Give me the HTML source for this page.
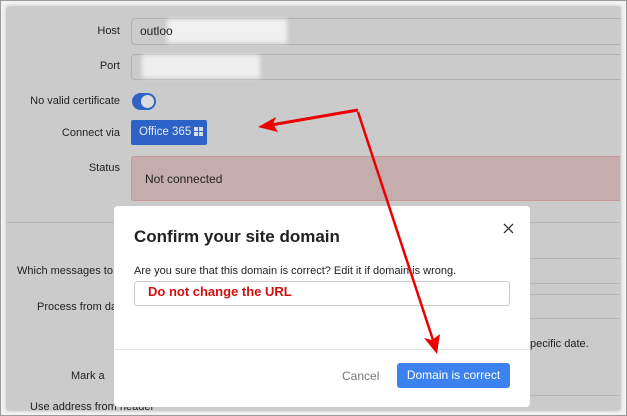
<!DOCTYPE html><html><head><style>
body{margin:0;width:627px;height:416px;overflow:hidden;background:#fff;font-family:"Liberation Sans",sans-serif;position:relative}
.frame{position:absolute;left:0;top:0;width:625px;height:414px;border:1px solid #9a9a9a;background:#f4f4f4}
.page{position:absolute;left:7px;top:7px;width:613px;height:403px;background:#cbcbcb;box-shadow:0 0 4px #999;overflow:hidden}
.t{position:absolute;font-size:11px;color:#222;white-space:nowrap}
.in{position:absolute;border:1px solid #b0b0b0;border-radius:4px;background:#cbcbcb}
.hl{position:absolute;left:0;right:0;height:1px;background:#b5b5b5}
.modal{position:absolute;left:114px;top:206px;width:416px;height:201px;background:#fff;border-radius:4px}
</style></head><body>
<div class="frame"></div>
<div class="page">
<div class="t" style="right:500px;top:18px">Host</div>
<div class="in" style="left:124px;top:11px;width:500px;height:25px"></div>
<div style="position:absolute;left:160px;top:12px;width:120px;height:24px;background:#f0f0f0;filter:blur(2px)"></div>
<div class="t" style="left:133px;top:17px;font-size:12px">outloo</div>
<div class="t" style="right:500px;top:53px">Port</div>
<div class="in" style="left:124px;top:47px;width:500px;height:24px"></div>
<div style="position:absolute;left:135px;top:48px;width:118px;height:23px;background:#efefef;filter:blur(2px)"></div>
<div class="t" style="right:500px;top:88px">No valid certificate</div>
<div style="position:absolute;left:125px;top:86px;width:24px;height:17px;border-radius:9px;background:#2f63c3"><div style="position:absolute;right:2px;top:2px;width:13px;height:13px;border-radius:50%;background:#ddd"></div></div>
<div class="t" style="right:500px;top:120px">Connect via</div>
<div style="position:absolute;left:124px;top:113px;width:76px;height:25px;background:#2d63c8;border-radius:2px;color:#e8e8e8;font-size:11.5px;line-height:24px;padding-left:8px;box-sizing:border-box;white-space:nowrap">Office 365 <svg width="9" height="9" style="vertical-align:-1px"><rect x="0" y="0" width="4" height="4" fill="#ddd"/><rect x="5" y="0" width="4" height="4" fill="#ddd"/><rect x="0" y="5" width="4" height="4" fill="#ddd"/><rect x="5" y="5" width="4" height="4" fill="#ddd"/></svg></div>
<div class="t" style="right:500px;top:155px">Status</div>
<div style="position:absolute;left:124px;top:149px;width:500px;height:43px;background:#c5adad;border:1px solid #c59a9a;border-radius:3px"></div>
<div class="t" style="left:138px;top:165px;font-size:12px">Not connected</div>
<div class="hl" style="top:215px"></div>
<div class="hl" style="top:251px;left:520px"></div>
<div class="hl" style="top:276px;left:520px"></div>
<div class="hl" style="top:287px;left:520px"></div>
<div class="hl" style="top:311px;left:520px"></div>
<div class="hl" style="top:388px;left:520px"></div>
<div class="t" style="left:10px;top:258px">Which messages to p</div>
<div class="t" style="left:30px;top:294px">Process from dat</div>
<div class="t" style="left:523px;top:331px">pecific date.</div>
<div class="t" style="left:64px;top:363px">Mark a</div>
<div class="t" style="left:23px;top:394px">Use address from header</div>
</div>
<div class="modal">
<div style="position:absolute;left:20px;top:21px;font-size:17px;font-weight:bold;color:#222">Confirm your site domain</div>
<svg style="position:absolute;left:389px;top:17px" width="11" height="11"><path d="M1 1L10 10M10 1L1 10" stroke="#333" stroke-width="1.3"/></svg>
<div style="position:absolute;left:20px;top:59px;font-size:11px;color:#222">Are you sure that this domain is correct? Edit it if domain is wrong.</div>
<div style="position:absolute;left:20px;top:75px;width:374px;height:23px;border:1px solid #ccc;border-radius:3px"></div>
<div style="position:absolute;left:34px;top:78px;font-size:13px;font-weight:bold;color:#d21010">Do not change the URL</div>
<div style="position:absolute;left:0;right:0;top:143px;height:1px;background:#e5e5e5"></div>
<div style="position:absolute;left:228px;top:163px;font-size:12px;color:#777">Cancel</div>
<div style="position:absolute;left:283px;top:157px;width:113px;height:25px;background:#3b82ee;border-radius:3px;color:#fff;font-size:12px;line-height:25px;text-align:center">Domain is correct</div>
</div>
<svg style="position:absolute;left:0;top:0" width="627" height="416">
<path d="M358 110 L271 125" stroke="#e00" stroke-width="3" fill="none"/>
<path d="M258 127 L276 117 L273 124 L278 132 Z" fill="#e00"/>
<path d="M358 112 L433 340" stroke="#e00" stroke-width="2.5" fill="none"/>
<path d="M437 354 L424 338 L432 340 L440 334 Z" fill="#e00"/>
</svg>
</body></html>
